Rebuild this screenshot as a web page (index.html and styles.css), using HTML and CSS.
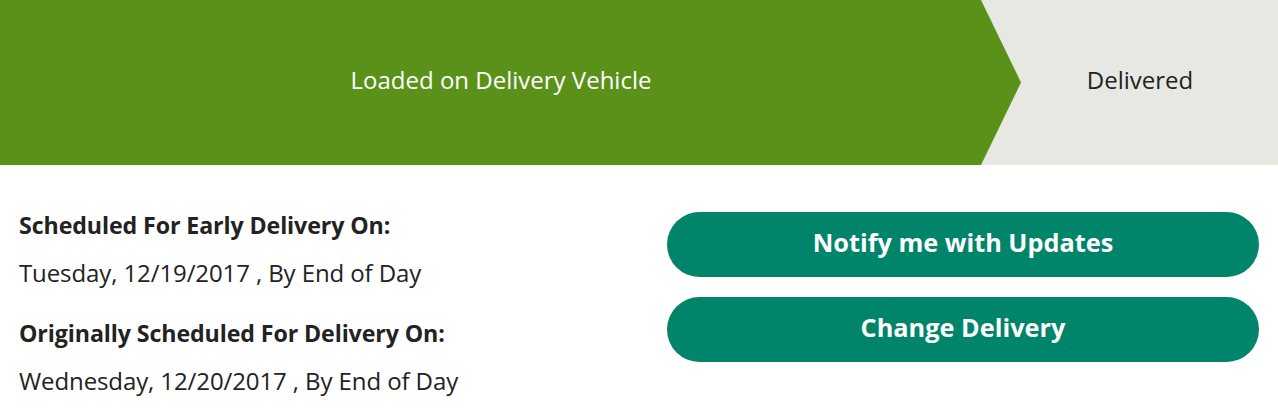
FILE: index.html
```html
<!DOCTYPE html>
<html>
<head>
<meta charset="utf-8">
<link rel="stylesheet" href="styles.css">
</head>
<body>
<div class="tracker">
  <div class="step step-done">
    <span class="step-label">Loaded on Delivery Vehicle</span>
    <svg class="arrow" width="42" height="165" viewBox="0 0 42 165" preserveAspectRatio="none"><polygon points="0,0 1,0 41,82.5 1,165 0,165" fill="#5a9219"/></svg>
  </div>
  <div class="step step-next">
    <span class="step-label">Delivered</span>
  </div>
</div>
<div class="details">
  <div class="dates">
    <h3 class="label">Scheduled For Early Delivery On:</h3>
    <p class="value">Tuesday, 12/19/2017 , By End of Day</p>
    <h3 class="label">Originally Scheduled For Delivery On:</h3>
    <p class="value">Wednesday, 12/20/2017 , By End of Day</p>
  </div>
  <div class="actions">
    <button class="btn">Notify me with Updates</button>
    <button class="btn">Change Delivery</button>
  </div>
</div>
</body>
</html>
```
FILE: styles.css
```css
* { box-sizing: border-box; }
html, body { margin: 0; padding: 0; background: #fff; }
body { font-family: "Open Sans", "Liberation Sans", sans-serif; color: #222; width: 1278px; height: 417px; overflow: hidden; }
.tracker { display: flex; height: 165px; background: #e8e8e3; }
.step { display: flex; align-items: center; justify-content: center; position: relative; padding-bottom: 7px; }
.step-done { width: 980px; background: #5a9219; color: #fff; }
.step-next { flex: 1; color: #222; padding-left: 22px; }
.step-label { font-size: 24px; }
.step-done .step-label { margin-left: 22px; }
.arrow { position: absolute; top: 0; left: 980px; height: 165px; width: 42px; display: block; }
.details { display: flex; padding: 0 19px; }
.dates { width: 648px; padding-top: 44px; }
.label { margin: 0 0 16px; font-size: 23.2px; font-weight: 700; line-height: 32px; letter-spacing: -0.1px; color: #222; }
.value { margin: 0 0 28px; font-size: 24px; font-weight: 400; line-height: 32px; letter-spacing: -0.1px; color: #222; }
.actions { flex: 1; display: flex; flex-direction: column; gap: 20px; padding-top: 47px; }
.btn { height: 65px; border: none; border-radius: 33px; background: #00846a; color: #fff; font-family: "Open Sans", "Liberation Sans", sans-serif; font-size: 25.3px; font-weight: 700; padding: 0 0 5px; cursor: pointer; }
```
